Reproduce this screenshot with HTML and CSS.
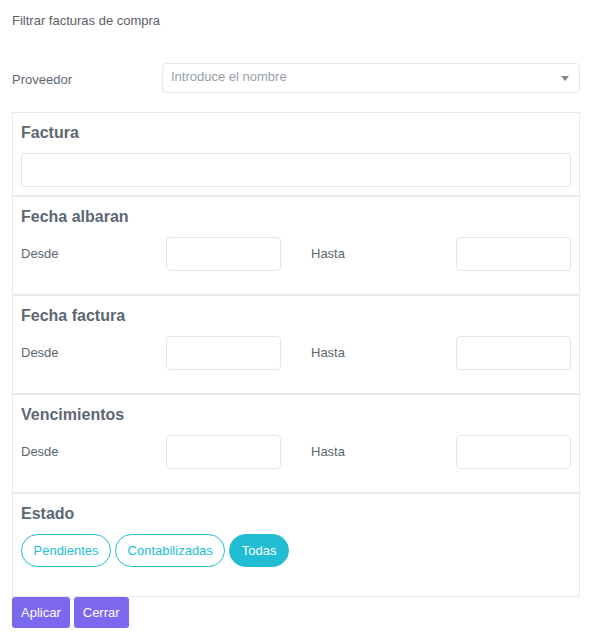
FILE: index.html
```html
<!DOCTYPE html>
<html lang="es">
<head>
<meta charset="utf-8">
<title>Filtrar facturas de compra</title>
<link rel="stylesheet" href="styles.css">
</head>
<body>
<div class="page">
  <div class="title">Filtrar facturas de compra</div>

  <div class="prov-row">
    <label class="prov-label">Proveedor</label>
    <div class="select">
      <span class="placeholder">Introduce el nombre</span>
      <span class="caret"></span>
    </div>
  </div>

  <div class="panel">
    <section class="section sec-factura">
      <h3 class="sec-title">Factura</h3>
      <div class="input wide"></div>
    </section>

    <section class="section">
      <h3 class="sec-title">Fecha albaran</h3>
      <div class="range">
        <div class="field"><span class="lbl">Desde</span><div class="input small"></div></div>
        <div class="field"><span class="lbl">Hasta</span><div class="input small"></div></div>
      </div>
    </section>

    <section class="section">
      <h3 class="sec-title">Fecha factura</h3>
      <div class="range">
        <div class="field"><span class="lbl">Desde</span><div class="input small"></div></div>
        <div class="field"><span class="lbl">Hasta</span><div class="input small"></div></div>
      </div>
    </section>

    <section class="section">
      <h3 class="sec-title">Vencimientos</h3>
      <div class="range">
        <div class="field"><span class="lbl">Desde</span><div class="input small"></div></div>
        <div class="field"><span class="lbl">Hasta</span><div class="input small"></div></div>
      </div>
    </section>

    <section class="section sec-estado">
      <h3 class="sec-title">Estado</h3>
      <div class="pills">
        <button class="pill">Pendientes</button>
        <button class="pill">Contabilizadas</button>
        <button class="pill active">Todas</button>
      </div>
    </section>
  </div>

  <div class="actions">
    <button class="btn">Aplicar</button>
    <button class="btn">Cerrar</button>
  </div>
</div>
</body>
</html>
```

FILE: styles.css
```css
* { box-sizing: border-box; }

html, body {
  margin: 0;
  padding: 0;
  background: #ffffff;
}

body {
  font-family: "Liberation Sans", Arial, sans-serif;
  font-size: 13px;
  color: #5e6670;
}

.page {
  padding: 13px 10px 0 12px;
}

.title {
  line-height: 15px;
  color: #5b6168;
}

.prov-row {
  display: flex;
  align-items: center;
  margin-top: 35px;
}

.prov-label {
  width: 150px;
  padding-top: 3px;
  color: #5e6670;
}

.select {
  flex: 1;
  height: 30px;
  border: 1px solid #e6e8eb;
  border-radius: 4px;
  display: flex;
  align-items: center;
  justify-content: space-between;
  padding: 0 8px 0 8px;
}

.placeholder {
  color: #999ea5;
  margin-top: -3px;
}

.caret {
  width: 0;
  height: 0;
  border-left: 4px solid transparent;
  border-right: 4px solid transparent;
  border-top: 5px solid #888888;
  margin-right: 2px;
}

.panel {
  margin-top: 19px;
}

.section {
  border: 1px solid #e8eaed;
  padding: 10px 8px 23px 8px;
}

.sec-factura { padding-bottom: 8px; }
.sec-estado { padding-bottom: 29px; }

.sec-title {
  margin: 0 0 11px 0;
  font-size: 16px;
  line-height: 19px;
  font-weight: bold;
  color: #5d6773;
}

.input {
  height: 34px;
  border: 1px solid #e4e7ea;
  border-radius: 4px;
  background: #ffffff;
}

.input.small { width: 115px; }

.range {
  display: grid;
  grid-template-columns: 1fr 1fr;
  column-gap: 30px;
}

.field {
  display: flex;
  align-items: center;
  justify-content: space-between;
}

.lbl {
  color: #5e6670;
  margin-top: -2px;
}

.pills {
  display: flex;
  gap: 4px;
}

.pill {
  font-family: inherit;
  font-size: 13px;
  height: 33px;
  padding: 0 11.5px;
  border: 1px solid #22bdd3;
  border-radius: 17px;
  background: #ffffff;
  color: #22bdd3;
  cursor: pointer;
}

.pill.active {
  background: #22bdd3;
  color: #ffffff;
}

.actions {
  display: flex;
  gap: 4px;
  margin-top: 0;
}

.btn {
  font-family: inherit;
  font-size: 13px;
  height: 31px;
  padding: 0 9px;
  border: none;
  border-radius: 3px;
  background: #7b68ee;
  color: #ffffff;
  cursor: pointer;
}
```
